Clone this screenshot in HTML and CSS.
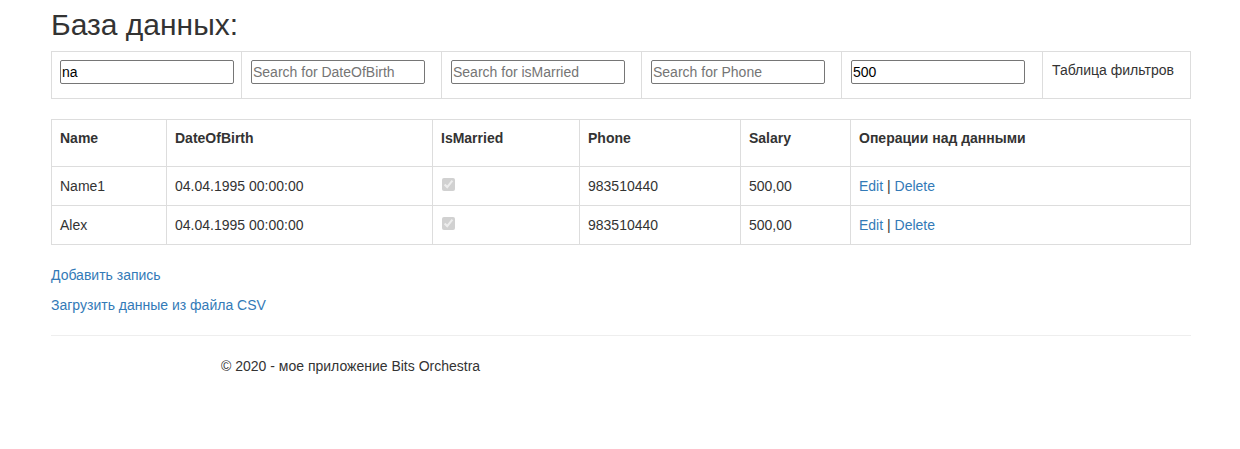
FILE: index.html
```html
<!DOCTYPE html>
<html lang="ru">
<head>
  <meta charset="UTF-8">
  <title>База данных</title>
  <link rel="stylesheet" href="styles.css">
</head>
<body>
  <div class="container">
    <h2 class="page-title">База данных:</h2>

    <table class="table filters">
      <tr>
        <td class="col-name"><input type="text" value="na" placeholder="Search for Name"></td>
        <td class="col-mid"><input type="text" placeholder="Search for DateOfBirth"></td>
        <td class="col-mid"><input type="text" placeholder="Search for isMarried"></td>
        <td class="col-mid"><input type="text" placeholder="Search for Phone"></td>
        <td class="col-mid col-salary"><input type="text" value="500" placeholder="Search for Salary"></td>
        <td>Таблица фильтров</td>
      </tr>
    </table>

    <table class="table data">
      <thead>
        <tr>
          <th class="c1">Name</th>
          <th class="c2">DateOfBirth</th>
          <th class="c3">IsMarried</th>
          <th class="c4">Phone</th>
          <th class="c5">Salary</th>
          <th>Операции над данными</th>
        </tr>
      </thead>
      <tbody>
        <tr>
          <td>Name1</td>
          <td>04.04.1995 00:00:00</td>
          <td><input type="checkbox" checked disabled></td>
          <td>983510440</td>
          <td>500,00</td>
          <td><a href="#">Edit</a> | <a href="#">Delete</a></td>
        </tr>
        <tr>
          <td>Alex</td>
          <td>04.04.1995 00:00:00</td>
          <td><input type="checkbox" checked disabled></td>
          <td>983510440</td>
          <td>500,00</td>
          <td><a href="#">Edit</a> | <a href="#">Delete</a></td>
        </tr>
      </tbody>
    </table>

    <p><a href="#">Добавить запись</a></p>
    <p><a href="#">Загрузить данные из файла CSV</a></p>

    <hr>
    <footer>
      <p>&copy; 2020 - мое приложение Bits Orchestra</p>
    </footer>
  </div>
</body>
</html>
```

FILE: styles.css
```css
/* base */
html, body { margin: 0; padding: 0; }
body {
  font-family: "Liberation Sans", Arial, sans-serif;
  font-size: 14px;
  line-height: 20px;
  color: #333;
  background: #fff;
}
a { color: #337ab7; text-decoration: none; }
p { margin: 0 0 10px; }

/* layout */
.container { width: 1140px; margin: 0 auto; padding: 0 14px 0 16px; }

.page-title {
  font-size: 30px;
  font-weight: 500;
  line-height: 33px;
  margin: 8px 0 10px;
}

/* tables */
.table {
  width: 100%;
  border-collapse: collapse;
  border: 1px solid #ddd;
  margin-bottom: 20px;
}
.table td, .table th {
  border: 1px solid #ddd;
  text-align: left;
  vertical-align: top;
}

/* filter row */
.filters td { padding: 8px 8px 8px 9px; }
.filters .col-name { width: 174px; padding: 8px 7px 8px 8px; }
.filters .col-mid { width: 182px; }
.filters .col-salary { width: 183px; }
.filters input {
  display: block;
  box-sizing: border-box;
  width: 174px;
  height: 24px;
  margin: 0 0 6px;
  padding: 1px 1px;
  font-family: "Liberation Sans", Arial, sans-serif;
  font-size: 14px;
  color: #000;
  border: 1px solid #767676;
  border-radius: 2px;
  background: #fff;
}
.filters input::placeholder { color: #757575; }

/* data table */
.data th { font-weight: bold; padding: 8px 8px 18px; }
.data td { padding: 9px 8px; }
.data .c1 { width: 98px; }
.data .c2 { width: 249px; }
.data .c3 { width: 130px; }
.data .c4 { width: 144px; }
.data .c5 { width: 93px; }
.data input[type=checkbox] { margin: 2px 0 0 1px; width: 13px; height: 13px; vertical-align: top; }

/* footer */
hr { border: 0; border-top: 1px solid #eee; margin: 20px 0; }
footer p { margin-left: 170px; }
```
